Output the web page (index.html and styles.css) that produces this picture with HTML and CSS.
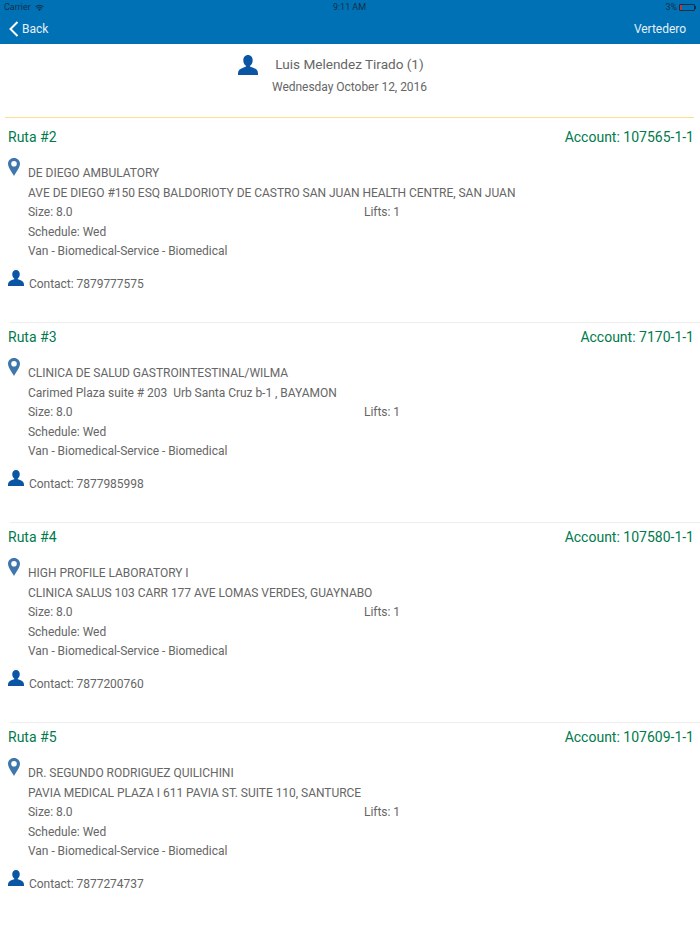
FILE: index.html
```html
<!DOCTYPE html>
<html lang="en">
<head>
    <meta charset="UTF-8">
    <meta name="viewport" content="width=device-width, initial-scale=1.0">
    <title>Rutas</title>
    <link rel="stylesheet" href="styles.css">
</head>
<body>
    <svg class="icon-defs" width="0" height="0">
        <symbol id="person" viewBox="0 0 20 20">
            <path d="M10 0c2.900 0 4.700 2.300 4.700 5.200 0 2.300-1 4.300-2.500 5.400v1.100c2.900.8 6.300 2.200 7.300 4.300.3.700.5 2 .5 4H0c0-2 .2-3.300.5-4 1-2.100 4.400-3.500 7.300-4.300v-1.100C6.300 9.500 5.300 7.500 5.300 5.200 5.300 2.300 7.100 0 10 0z"/>
        </symbol>
        <symbol id="pin" viewBox="0 0 12 18">
            <path fill-rule="evenodd" d="M6 0c3.400 0 6 2.600 6 5.800C12 9.300 8.500 13.700 6 18 3.500 13.700 0 9.300 0 5.800 0 2.600 2.600 0 6 0zm0 3a2.800 2.800 0 1 0 0 5.600A2.800 2.800 0 0 0 6 3z"/>
        </symbol>
    </svg>

    <header class="navbar">
        <div class="status-bar">
            <div class="status-left">
                <span>Carrier</span>
                <svg class="wifi" viewBox="0 0 12 9" width="9" height="7">
                    <path d="M6 9 3.900 6.800a3 3 0 0 1 4.200 0zM3.100 6A4.200 4.200 0 0 1 8.900 6l1-1A5.600 5.600 0 0 0 2.100 5zM1.300 4.200a6.700 6.700 0 0 1 9.400 0l1-1A8.100 8.100 0 0 0 .3 3.200z"/>
                </svg>
            </div>
            <div class="status-time">9:11 AM</div>
            <div class="status-right">
                <span>3%</span>
                <span class="battery"><span class="battery-level"></span></span>
            </div>
        </div>
        <div class="nav-row">
            <div class="nav-back">
                <svg class="chevron" viewBox="0 0 10 16" width="10" height="16">
                    <path d="M8.500 1 1.500 8l7 7"/>
                </svg>
                <span>Back</span>
            </div>
            <div>Vertedero</div>
        </div>
    </header>

    <section class="driver">
        <div class="driver-name">
            <svg class="icon-person"><use href="#person"/></svg>
            <span>Luis Melendez Tirado (1)</span>
        </div>
        <div class="driver-date">Wednesday October 12, 2016</div>
    </section>

    <main>
        <article class="stop">
            <div class="stop-head"><span>Ruta #2</span><span>Account: 107565-1-1</span></div>
            <div class="stop-body">
                <svg class="icon-pin"><use href="#pin"/></svg>
                <div class="stop-lines">
                    <div>DE DIEGO AMBULATORY</div>
                    <div>AVE DE DIEGO #150 ESQ BALDORIOTY DE CASTRO SAN JUAN HEALTH CENTRE, SAN JUAN</div>
                    <div class="size-row"><span>Size: 8.0</span><span>Lifts: 1</span></div>
                    <div>Schedule: Wed</div>
                    <div>Van - Biomedical-Service - Biomedical</div>
                </div>
            </div>
            <div class="stop-contact">
                <svg class="icon-contact"><use href="#person"/></svg>
                <span>Contact: 7879777575</span>
            </div>
        </article>

        <article class="stop">
            <div class="stop-head"><span>Ruta #3</span><span>Account: 7170-1-1</span></div>
            <div class="stop-body">
                <svg class="icon-pin"><use href="#pin"/></svg>
                <div class="stop-lines">
                    <div>CLINICA DE SALUD GASTROINTESTINAL/WILMA</div>
                    <div>Carimed Plaza suite # 203&nbsp; Urb Santa Cruz b-1 , BAYAMON</div>
                    <div class="size-row"><span>Size: 8.0</span><span>Lifts: 1</span></div>
                    <div>Schedule: Wed</div>
                    <div>Van - Biomedical-Service - Biomedical</div>
                </div>
            </div>
            <div class="stop-contact">
                <svg class="icon-contact"><use href="#person"/></svg>
                <span>Contact: 7877985998</span>
            </div>
        </article>

        <article class="stop">
            <div class="stop-head"><span>Ruta #4</span><span>Account: 107580-1-1</span></div>
            <div class="stop-body">
                <svg class="icon-pin"><use href="#pin"/></svg>
                <div class="stop-lines">
                    <div>HIGH PROFILE LABORATORY I</div>
                    <div>CLINICA SALUS 103 CARR 177 AVE LOMAS VERDES, GUAYNABO</div>
                    <div class="size-row"><span>Size: 8.0</span><span>Lifts: 1</span></div>
                    <div>Schedule: Wed</div>
                    <div>Van - Biomedical-Service - Biomedical</div>
                </div>
            </div>
            <div class="stop-contact">
                <svg class="icon-contact"><use href="#person"/></svg>
                <span>Contact: 7877200760</span>
            </div>
        </article>

        <article class="stop">
            <div class="stop-head"><span>Ruta #5</span><span>Account: 107609-1-1</span></div>
            <div class="stop-body">
                <svg class="icon-pin"><use href="#pin"/></svg>
                <div class="stop-lines">
                    <div>DR. SEGUNDO RODRIGUEZ QUILICHINI</div>
                    <div>PAVIA MEDICAL PLAZA I 611 PAVIA ST. SUITE 110, SANTURCE</div>
                    <div class="size-row"><span>Size: 8.0</span><span>Lifts: 1</span></div>
                    <div>Schedule: Wed</div>
                    <div>Van - Biomedical-Service - Biomedical</div>
                </div>
            </div>
            <div class="stop-contact">
                <svg class="icon-contact"><use href="#person"/></svg>
                <span>Contact: 7877274737</span>
            </div>
        </article>
    </main>
</body>
</html>
```

FILE: styles.css
```css
html, body {
    margin: 0;
    padding: 0;
}
body {
    font-family: Roboto, "Liberation Sans", sans-serif;
    background: #fff;
    color: #666;
    font-size: 12px;
    letter-spacing: -0.03px;
    height: 934px;
    overflow: hidden;
}
.icon-defs {
    position: absolute;
}

/* top bar */
.navbar {
    height: 44px;
    background: #0071b5;
}
.status-bar {
    height: 14px;
    display: grid;
    grid-template-columns: 1fr auto 1fr;
    align-items: center;
    padding: 0 5px 0 4px;
    font-size: 9px;
    color: #12304a;
}
.status-left {
    display: flex;
    align-items: center;
    gap: 4px;
}
.wifi {
    fill: #12304a;
}
.status-time {
    text-align: center;
}
.status-right {
    display: flex;
    align-items: center;
    justify-content: flex-end;
    gap: 2px;
}
.battery {
    display: block;
    position: relative;
    width: 14px;
    height: 5px;
    border: 1px solid #12304a;
    border-radius: 1px;
}
.battery::after {
    content: "";
    position: absolute;
    top: 1px;
    right: -2px;
    width: 1px;
    height: 3px;
    background: #12304a;
}
.battery-level {
    display: block;
    width: 2px;
    height: 5px;
    background: #c0392b;
}
.nav-row {
    height: 30px;
    display: flex;
    align-items: center;
    justify-content: space-between;
    padding: 0 14px 0 9px;
    color: #e4f0f8;
    font-size: 12px;
}
.nav-back {
    display: flex;
    align-items: center;
    gap: 3px;
}
.chevron {
    fill: none;
    stroke: #fff;
    stroke-width: 2;
}

/* driver heading */
.driver {
    height: 73px;
    margin: 0 6px 5px 5px;
    border-bottom: 1px solid #fde08a;
}
.driver-name {
    display: grid;
    grid-template-columns: 1fr auto 1fr;
    align-items: center;
    column-gap: 17px;
    padding-top: 10px;
    font-size: 13.600px;
    height: 22px;
}
.driver-name span {
    padding-bottom: 2px;
}
.icon-person {
    width: 20px;
    height: 20px;
    fill: #0a56a4;
    justify-self: end;
}
.driver-date {
    text-align: center;
    margin-top: 4px;
}

/* stops */
.stop {
    height: 199px;
    margin-left: 10px;
    border-bottom: 1px solid #eee;
}
.stop:last-child {
    border-bottom: 0;
}
.stop-head {
    display: flex;
    justify-content: space-between;
    padding: 6px 6px 0 0;
    margin-left: -2px;
    font-size: 14px;
    letter-spacing: 0;
    color: #007a4d;
    height: 27px;
}
.stop-body {
    display: flex;
    margin-left: -2px;
}
.icon-pin {
    width: 12px;
    height: 18px;
    margin-top: 2px;
    fill: #3f76ab;
    flex: none;
    margin-right: 8px;
}
.stop-lines {
    flex: 1;
    padding-top: 8px;
    line-height: 19.500px;
}
.size-row {
    display: grid;
    grid-template-columns: 336px 1fr;
}
.stop-contact {
    display: flex;
    align-items: flex-start;
    margin-top: 8px;
    margin-left: -2px;
}
.icon-contact {
    width: 16px;
    height: 16px;
    fill: #0a56a4;
    margin-right: 5px;
    flex: none;
}
.stop-contact span {
    margin-top: 7px;
}
```
